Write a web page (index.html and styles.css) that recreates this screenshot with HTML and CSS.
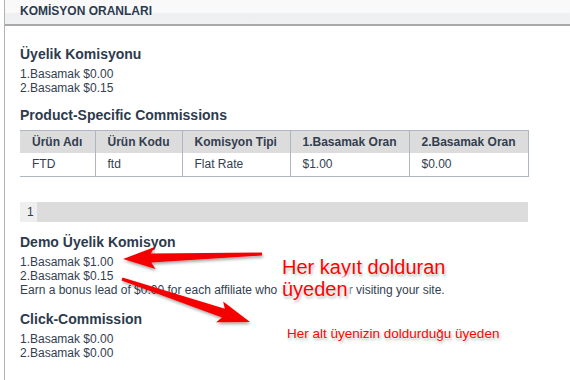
FILE: index.html
```html
<!DOCTYPE html>
<html lang="tr">
<head>
  <meta charset="UTF-8" />
  <title>Komisyon Oranları</title>
  <link rel="stylesheet" href="styles.css">
</head>
<body>

<div class="panel">
  <div class="panel-head">KOMİSYON ORANLARI</div>

  <div class="panel-body">
    <h3 class="first">Üyelik Komisyonu</h3>
    <p>1.Basamak $0.00<br>2.Basamak $0.15</p>

    <h3>Product-Specific Commissions</h3>
    <table class="rates">
      <tr>
        <th class="c1">Ürün Adı</th>
        <th class="c2">Ürün Kodu</th>
        <th class="c3">Komisyon Tipi</th>
        <th class="c4">1.Basamak Oran</th>
        <th class="c5">2.Basamak Oran</th>
      </tr>
      <tr>
        <td>FTD</td>
        <td>ftd</td>
        <td>Flat Rate</td>
        <td>$1.00</td>
        <td>$0.00</td>
      </tr>
    </table>

    <div class="pager"><span class="page">1</span></div>

    <h3>Demo Üyelik Komisyon</h3>
    <p>1.Basamak $1.00<br>2.Basamak $0.15<br>Earn a bonus lead of $0.00 for each affiliate who signs up after visiting your site.</p>

    <h3 class="last">Click-Commission</h3>
    <p>1.Basamak $0.00<br>2.Basamak $0.00</p>
  </div>
</div>

<!-- annotations -->
<svg class="marks" width="570" height="380" viewBox="0 0 570 380">
  <defs>
    <filter id="shade" x="-20%" y="-50%" width="140%" height="200%">
      <feDropShadow dx="1" dy="2" stdDeviation="1.6" flood-color="#000" flood-opacity="0.35"/>
    </filter>
  </defs>
  <g filter="url(#shade)" fill="#f50000">
    <!-- arrow pointing right, tip at (L,0); rotated into place -->
    <polygon transform="translate(262,254) rotate(177.9)" points="0,-1.5 111,-4.5 107,-11 139,0 107,11 111,4.5 0,1.5"/>
    <polygon transform="translate(122,279) rotate(18.6)" points="0,-1.5 107,-4.5 103,-11 135,0 103,11 107,4.5 0,1.5"/>
  </g>
</svg>
<div class="note big"><span>Her kayıt dolduran</span><br><span class="cover">üyeden</span></div>
<div class="note small">Her alt üyenizin doldurduğu üyeden</div>

</body>
</html>
```

FILE: styles.css
```css
body { margin: 0; font-family: "Liberation Sans", Arial, sans-serif; color: #333e4f; background: #fff; position: relative; height: 380px; overflow: hidden; }
.panel { margin-left: 4px; border-left: 1px solid #b3b3b3; min-height: 380px; }
.panel-head { height: 26px; box-sizing: border-box; padding: 4px 0 0 15px; font-size: 12px; font-weight: bold; color: #2c3a4f; background: linear-gradient(#f9f9f9 0, #f9f9f9 13px, #eeeff0 13px, #f0f1f2 26px); border-bottom: 2px solid #a9a9a9; line-height: 14px; }
.panel-body { padding: 0 15px; }
h3 { font-size: 14px; line-height: 16px; margin: 12px 0 5px; color: #2d3a4c; }
h3.first { margin-top: 20px; }
h3.last { margin-top: 14px; }
p { font-size: 12px; line-height: 14px; margin: 0; }
.rates { border-collapse: collapse; width: 508px; margin-top: 7px; font-size: 12px; table-layout: fixed; border-top: 1px solid #aeb6c2; border-bottom: 1px solid #aeb6c2; border-right: 1px solid #aeb6c2; }
.rates th, .rates td { text-align: left; padding: 0 12px; border-left: 1px solid #aeb6c2; box-sizing: border-box; white-space: nowrap; }
.rates th:first-child, .rates td:first-child { border-left: none; }
.rates th { background: #dcdcdc; height: 22px; font-weight: bold; color: #333e4f; }
.rates td { height: 24px; }
.c1 { width: 75px; } .c2 { width: 87px; } .c3 { width: 108px; } .c4 { width: 119px; } .c5 { width: 119px; }
.pager { width: 508px; height: 20px; background: #dcdcdc; margin-top: 25px; display: flex; font-size: 12px; }
.page { width: 17px; background: #efefef; line-height: 20px; padding-left: 7px; box-sizing: border-box; }
.marks { position: absolute; left: 0; top: 0; pointer-events: none; }
.note { position: absolute; color: #ff0000; text-shadow: 0 0 2px #fff, 0 0 3px #fff, 1px 2px 3px rgba(0,0,0,0.35); }
.note .cover { background: #fff; box-shadow: 0 0 3px 2px #fff; }
.note.big { left: 282px; top: 256px; font-size: 20px; line-height: 22px; }
.note.small { left: 287px; top: 326px; font-size: 13.5px; line-height: 16px; }
```
